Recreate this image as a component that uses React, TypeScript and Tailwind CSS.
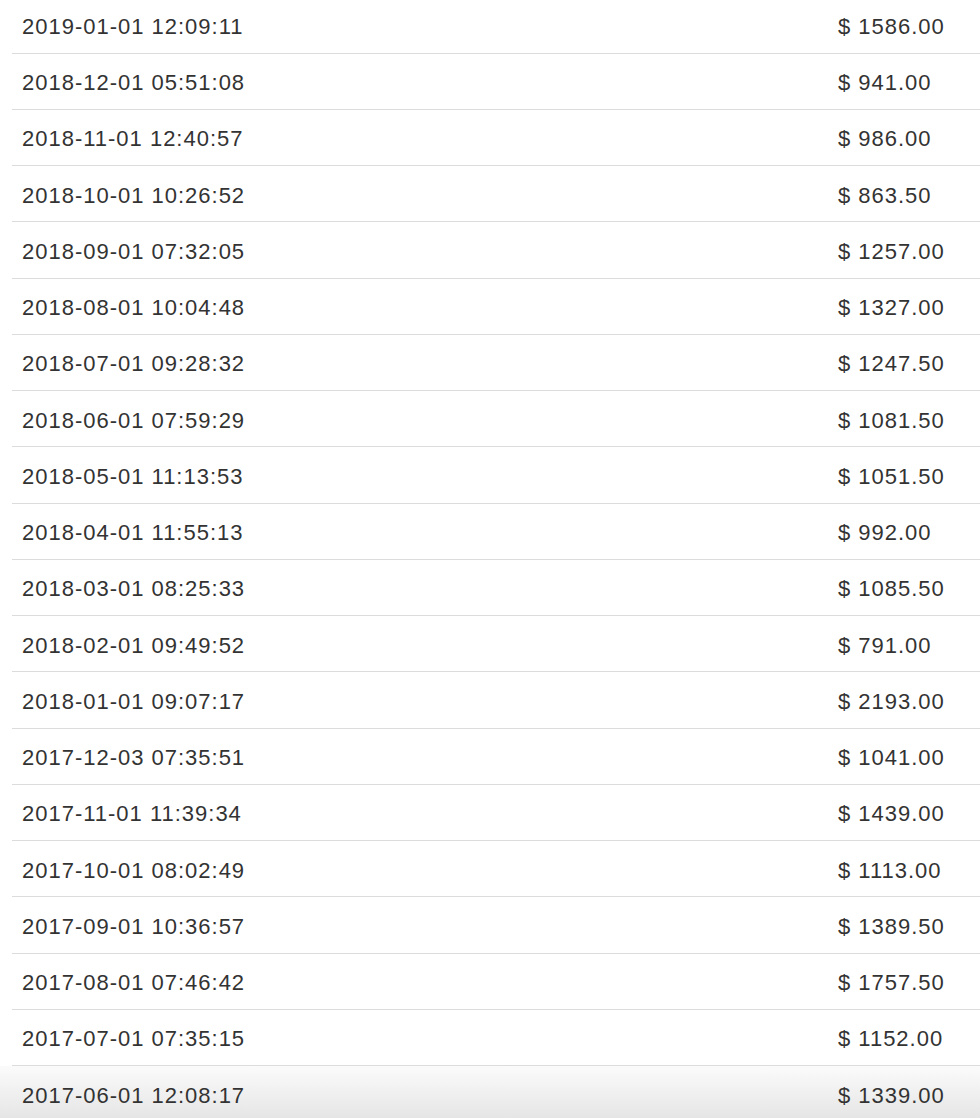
const rows: [string, string][] = [
  ["2019-01-01 12:09:11", "1586.00"],
  ["2018-12-01 05:51:08", "941.00"],
  ["2018-11-01 12:40:57", "986.00"],
  ["2018-10-01 10:26:52", "863.50"],
  ["2018-09-01 07:32:05", "1257.00"],
  ["2018-08-01 10:04:48", "1327.00"],
  ["2018-07-01 09:28:32", "1247.50"],
  ["2018-06-01 07:59:29", "1081.50"],
  ["2018-05-01 11:13:53", "1051.50"],
  ["2018-04-01 11:55:13", "992.00"],
  ["2018-03-01 08:25:33", "1085.50"],
  ["2018-02-01 09:49:52", "791.00"],
  ["2018-01-01 09:07:17", "2193.00"],
  ["2017-12-03 07:35:51", "1041.00"],
  ["2017-11-01 11:39:34", "1439.00"],
  ["2017-10-01 08:02:49", "1113.00"],
  ["2017-09-01 10:36:57", "1389.50"],
  ["2017-08-01 07:46:42", "1757.50"],
  ["2017-07-01 07:35:15", "1152.00"],
  ["2017-06-01 12:08:17", "1339.00"],
];

const App = () => {
  return (
    <div className="h-[1118px] overflow-hidden bg-white font-['Liberation_Sans',Arial,sans-serif] text-[22px] tracking-[0.045em] text-[#333]">
      <div className="mt-[-2.75px]">
        {rows.map(([date, amount], i) => {
          const last = i === rows.length - 1;
          return (
            <div
              key={date}
              className={
                last
                  ? "flex h-[56.25px] items-center pl-[22px] pt-[3px] bg-gradient-to-b from-[#fbfbfb] to-[#e4e4e4]"
                  : "ml-3 flex h-[56.25px] items-center pl-[10px] pt-[3px] border-b border-[#dcdcdc]"
              }
            >
              <div className="w-[816px]">{date}</div>
              <div className="flex-1">$ {amount}</div>
            </div>
          );
        })}
      </div>
    </div>
  );
};

export default App;
